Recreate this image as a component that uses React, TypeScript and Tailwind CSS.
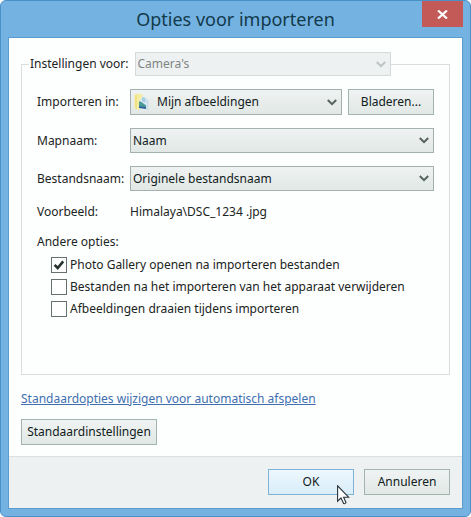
import type { ReactNode } from 'react';

type SelectProps = {
  id: string;
  value: string;
  className: string;
  disabled?: boolean;
  icon?: ReactNode;
};

const BUTTON =
  'h-[26px] border border-[#a3b3ae] bg-linear-to-b from-[#f0f3f3] to-[#e1e8e5] text-center text-[#10201c]';

function SelectBox({ id, value, className, disabled, icon }: SelectProps) {
  return (
    <div className={`relative ${className}`}>
      <select
        id={id}
        disabled={disabled}
        defaultValue={value}
        className={`block size-full appearance-none border pr-6 ${icon ? 'pl-[26px]' : 'pl-0.5'} ${
          disabled
            ? 'border-[#d5dad9] bg-[#eef1f1] text-[#7e8685] opacity-100'
            : 'border-[#a3b0ae] bg-linear-to-b from-[#eff2f2] to-[#e1e8e5] text-[#10201c]'
        }`}
      >
        <option>{value}</option>
      </select>
      {icon && <span className="pointer-events-none absolute inset-y-0 left-1 flex items-center">{icon}</span>}
      <span className="pointer-events-none absolute inset-y-0 right-[5px] flex items-center">
        <svg width="10" height="7" viewBox="0 0 10 7" className={disabled ? 'text-[#bcc2c2]' : 'text-[#56625f]'}>
          <path d="M0.8 1 L5 5.2 L9.2 1" fill="none" stroke="currentColor" strokeWidth="2" />
        </svg>
      </span>
    </div>
  );
}

function PicturesIcon() {
  return (
    <svg width="16" height="18" viewBox="0 0 16 18">
      <path d="M0.5 1.5 L5 0.5 L9 2 V15 L4 17 L0.5 15 Z" fill="#f5eda0" />
      <path d="M1 2 L3 1.5 V16 L1 15 Z" fill="#eee285" />
      <path d="M8 3.5 L13 5 V16.5 L5 15.5 V9 Z" fill="#dcebf3" />
      <path d="M8 4 L11.5 5 V9.5 L8 8.5 Z" fill="#a5cde4" />
      <path d="M5 8.5 C8 8 9 11 12 12 V15 L5 13 Z" fill="#4b9a98" />
      <path d="M5 13 L12 14 V16 L5 15 Z" fill="#2b6397" />
      <path d="M12.5 6 L14.5 7 V17.5 L12.5 16.5 Z" fill="#c9ddea" />
    </svg>
  );
}

function CheckOption({ id, label, checked }: { id: string; label: string; checked?: boolean }) {
  return (
    <div className="flex h-[22px] items-center gap-[3px]">
      <span className="relative flex">
        <input
          id={id}
          type="checkbox"
          defaultChecked={checked}
          className="peer size-4 appearance-none border border-[#66706f] bg-white"
        />
        <svg
          viewBox="0 0 16 16"
          className="pointer-events-none invisible absolute inset-0 size-4 peer-checked:visible"
        >
          <path d="M3.6 7.8 L6.7 11 L12.2 4.4" fill="none" stroke="#27312f" strokeWidth="2.6" />
        </svg>
      </span>
      <label htmlFor={id}>{label}</label>
    </div>
  );
}

function Cursor() {
  return (
    <svg width="13" height="20" viewBox="0 0 13 20" className="pointer-events-none absolute top-[15px] left-[68px]">
      <path
        d="M0.6 0.8 V16.2 L4 13 L6.6 18.6 Q8.2 19.2 9 17.6 L6.6 12.2 H11.6 Z"
        fill="#fff"
        stroke="#26323a"
        strokeWidth="1.1"
      />
    </svg>
  );
}

export default function App() {
  return (
    <div className="min-h-screen bg-white font-['Noto_Sans','Open_Sans',sans-serif] text-xs text-[#1a2422]">
      <div className="flex min-h-screen flex-col rounded-md border border-[#4b90c6] bg-[#74b2e2] px-[7px] pb-[7px]">
        <header className="grid h-9 grid-cols-[1fr_auto_1fr]">
          <h1 className="col-start-2 self-center text-lg text-[#123a4a]">Opties voor importeren</h1>
          <button
            type="button"
            aria-label="Sluiten"
            className="flex h-[26px] w-[41px] items-center justify-center justify-self-end bg-[#c45a58]"
          >
            <svg width="11" height="9" viewBox="0 0 11 9">
              <path d="M1 0.5 L10 8.5 M10 0.5 L1 8.5" stroke="#fff" strokeWidth="2.2" />
            </svg>
          </button>
        </header>

        <main className="flex flex-1 flex-col border border-[#5a9cd0] bg-[#fdfefe]">
          <div className="flex flex-1 flex-col px-3 pt-3.5 pb-[11px]">
            <fieldset className="min-w-0 flex-1 border border-[#d9dedd] px-[15px] pb-3">
              <legend className="-ml-2 pl-px">
                <div className="flex items-center gap-1.5">
                  <label htmlFor="source">Instellingen voor:</label>
                  <SelectBox id="source" value="Camera's" disabled className="h-6 w-64" />
                </div>
              </legend>

              <div className="mt-[13px] grid grid-cols-[93px_1fr] items-center gap-y-[13px]">
                <label htmlFor="target">Importeren in:</label>
                <div className="flex items-center gap-1.5">
                  <SelectBox
                    id="target"
                    value="Mijn afbeeldingen"
                    icon={<PicturesIcon />}
                    className="h-[26px] w-[212px]"
                  />
                  <button type="button" className={`${BUTTON} w-[86px]`}>
                    Bladeren...
                  </button>
                </div>
                <label htmlFor="folder">Mapnaam:</label>
                <SelectBox id="folder" value="Naam" className="h-[25px]" />
                <label htmlFor="file">Bestandsnaam:</label>
                <SelectBox id="file" value="Originele bestandsnaam" className="h-[25px]" />
                <span>Voorbeeld:</span>
                <span>Himalaya\DSC_1234 .jpg</span>
              </div>

              <p className="mt-3.5">Andere opties:</p>
              <div className="mt-1 pl-3.5">
                <CheckOption id="open" label="Photo Gallery openen na importeren bestanden" checked />
                <CheckOption id="delete" label="Bestanden na het importeren van het apparaat verwijderen" />
                <CheckOption id="rotate" label="Afbeeldingen draaien tijdens importeren" />
              </div>
            </fieldset>

            <a href="#autoplay" className="mt-4 self-start text-[#3f6fae] underline">
              Standaardopties wijzigen voor automatisch afspelen
            </a>
            <button type="button" className={`${BUTTON} mt-3 w-[136px] self-start`}>
              Standaardinstellingen
            </button>
          </div>

          <footer className="flex justify-end gap-2.5 border-t border-[#dbe0e0] bg-[#eef1f1] px-3 pt-3 pb-[13px]">
            <button
              type="button"
              className="relative h-[26px] w-[86px] border border-[#7fb3d5] bg-linear-to-b from-[#eef7fd] to-[#d9edf9] text-center text-[#10201c]"
            >
              OK
              <Cursor />
            </button>
            <button type="button" className={`${BUTTON} w-[86px]`}>
              Annuleren
            </button>
          </footer>
        </main>
      </div>
    </div>
  );
}
